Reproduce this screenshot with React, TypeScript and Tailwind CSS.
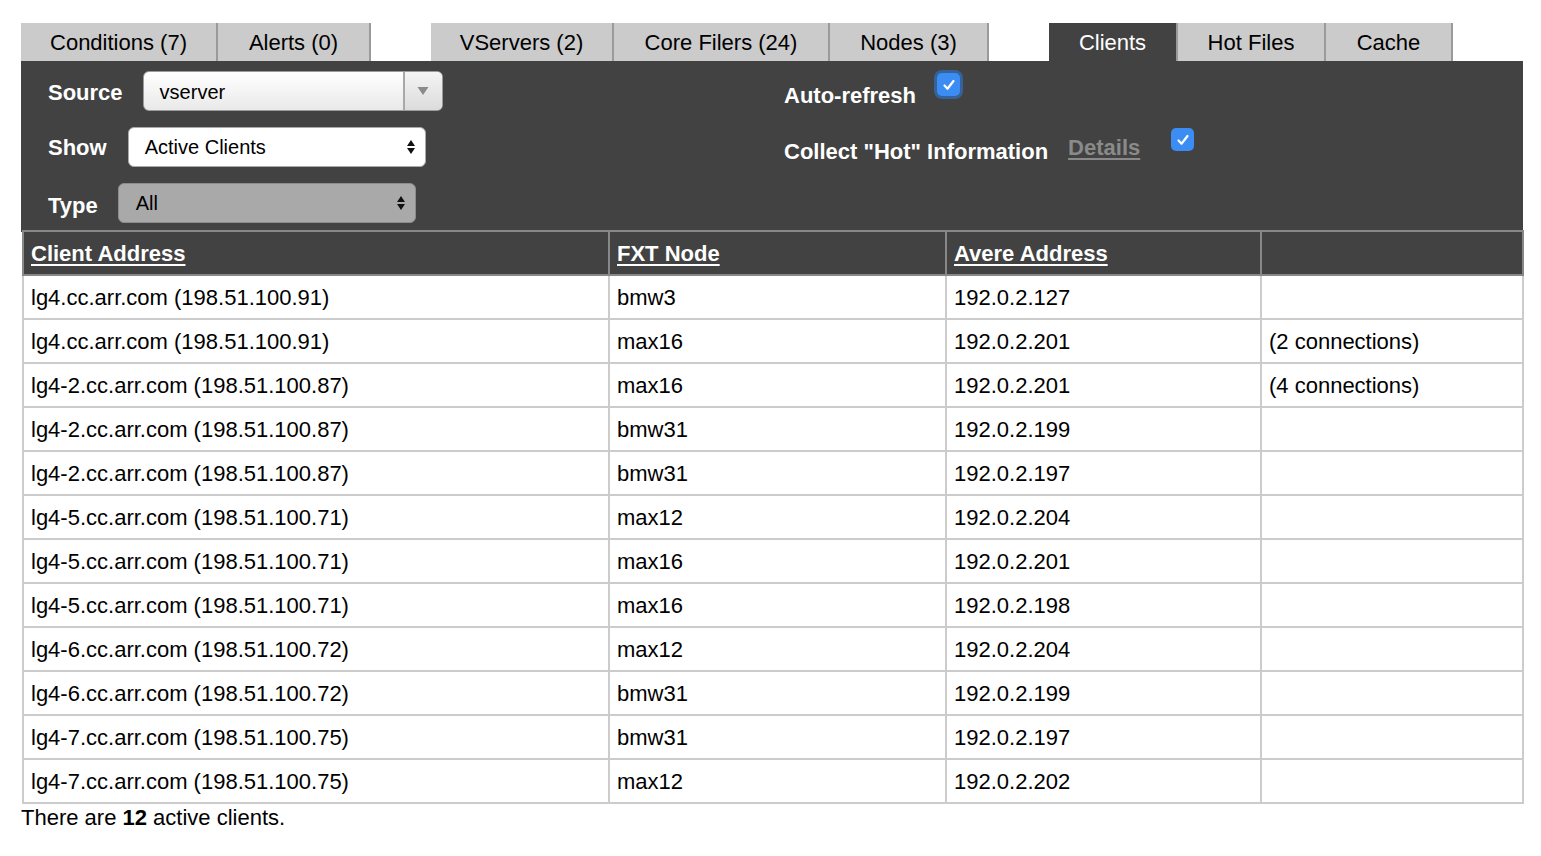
import React from 'react';

const font = { fontFamily: '"Liberation Sans", Arial, Helvetica, sans-serif' };

type Tab = { label: string; w: string; active?: boolean } | { gap: true };

const tabs: Tab[] = [
  { label: 'Conditions (7)', w: 'w-[197px]' },
  { label: 'Alerts (0)', w: 'w-[153px]' },
  { gap: true },
  { label: 'VServers (2)', w: 'w-[183px]' },
  { label: 'Core Filers (24)', w: 'w-[216px]' },
  { label: 'Nodes (3)', w: 'w-[159px]' },
  { gap: true },
  { label: 'Clients', w: 'w-[129px]', active: true },
  { label: 'Hot Files', w: 'w-[148px]' },
  { label: 'Cache', w: 'w-[127px]' },
];

const rows: [string, string, string, string][] = [
  ['lg4.cc.arr.com (198.51.100.91)', 'bmw3', '192.0.2.127', ''],
  ['lg4.cc.arr.com (198.51.100.91)', 'max16', '192.0.2.201', '(2 connections)'],
  ['lg4-2.cc.arr.com (198.51.100.87)', 'max16', '192.0.2.201', '(4 connections)'],
  ['lg4-2.cc.arr.com (198.51.100.87)', 'bmw31', '192.0.2.199', ''],
  ['lg4-2.cc.arr.com (198.51.100.87)', 'bmw31', '192.0.2.197', ''],
  ['lg4-5.cc.arr.com (198.51.100.71)', 'max12', '192.0.2.204', ''],
  ['lg4-5.cc.arr.com (198.51.100.71)', 'max16', '192.0.2.201', ''],
  ['lg4-5.cc.arr.com (198.51.100.71)', 'max16', '192.0.2.198', ''],
  ['lg4-6.cc.arr.com (198.51.100.72)', 'max12', '192.0.2.204', ''],
  ['lg4-6.cc.arr.com (198.51.100.72)', 'bmw31', '192.0.2.199', ''],
  ['lg4-7.cc.arr.com (198.51.100.75)', 'bmw31', '192.0.2.197', ''],
  ['lg4-7.cc.arr.com (198.51.100.75)', 'max12', '192.0.2.202', ''],
];

const UpDown = () => (
  <svg width="10" height="20" viewBox="0 0 10 20" className="shrink-0">
    <path d="M5 3L9 9H1z" fill="#111" />
    <path d="M5 17L9 11H1z" fill="#111" />
  </svg>
);

const Check = ({ focused }: { focused?: boolean }) => (
  <div
    className={`w-[23px] h-[23px] rounded-[5px] bg-[#3b8df3] flex items-center justify-center ${
      focused ? 'ring-[3px] ring-[#36629a]' : ''
    }`}
  >
    <svg width="16" height="16" viewBox="0 0 16 16">
      <path d="M3.5 8.5l3 3.2L12.5 4" fill="none" stroke="#fff" strokeWidth="2.2" strokeLinecap="round" strokeLinejoin="round" />
    </svg>
  </div>
);

export default function App() {
  return (
    <div className="min-h-screen bg-white text-black pt-[23px] pl-[21px]" style={font}>
      {/* TABS */}
      <div className="flex h-[38px] text-[22px]">
        {tabs.map((t, i) =>
          'gap' in t ? (
            <div key={i} className="w-[60px]" />
          ) : (
            <div
              key={i}
              className={`${t.w} h-full flex items-center justify-center pt-[1px] border-r-2 border-[#9a9a9a] ${
                t.active ? 'bg-[#424242] text-white' : 'bg-[#cbcbcb] text-black'
              }`}
            >
              {t.label}
            </div>
          )
        )}
      </div>

      {/* FILTERS */}
      <div className="w-[1502px] bg-[#424242] text-white flex pt-[10px] pb-[9px] pl-[27px]">
        <div className="w-[736px] flex flex-col gap-[16px]">
          <div className="flex items-center h-[40px]">
            <span className="font-bold text-[22px] pt-[2px]">Source</span>
            <div className="ml-[20px] w-[300px] h-[40px] rounded-[6px] border border-[#9c9c9c] bg-gradient-to-b from-white to-[#e9e9e9] flex text-black text-[20px] overflow-hidden">
              <div className="flex-1 flex items-center pl-[16px] pt-[2px]">vserver</div>
              <div className="w-[39px] border-l-2 border-[#a8a8a8] bg-gradient-to-b from-[#f4f4f4] to-[#dcdcdc] flex items-center justify-center">
                <svg width="12" height="10" viewBox="0 0 12 10">
                  <path d="M0.5 1H11.5L6 9z" fill="#8a8a8a" />
                </svg>
              </div>
            </div>
          </div>
          <div className="flex items-center h-[40px]">
            <span className="font-bold text-[22px]">Show</span>
            <div className="ml-[21px] w-[298px] h-[40px] rounded-[6px] border border-[#aaaaaa] bg-white flex items-center justify-between pl-[16px] pr-[9px] text-black text-[20px]">
              <span>Active Clients</span>
              <UpDown />
            </div>
          </div>
          <div className="flex items-center h-[40px]">
            <span className="font-bold text-[22px] pt-[4px]">Type</span>
            <div className="ml-[20px] w-[298px] h-[40px] rounded-[6px] border border-[#8c8c8c] bg-[#a9a9a9] flex items-center justify-between pl-[17px] pr-[9px] text-black text-[20px]">
              <span>All</span>
              <UpDown />
            </div>
          </div>
        </div>

        <div className="flex flex-col gap-[16px]">
          <div className="flex items-start h-[40px]">
            <span className="font-bold text-[22px] leading-[26px] mt-[12px]">Auto-refresh</span>
            <div className="ml-[21px] mt-[2px]">
              <Check focused />
            </div>
          </div>
          <div className="flex items-start h-[40px]">
            <span className="font-bold text-[22px] leading-[26px] mt-[12px]">Collect "Hot" Information</span>
            <span className="ml-[20px] mt-[8px] font-bold text-[22px] leading-[26px] text-[#8a8a8a] underline underline-offset-[3px]">
              Details
            </span>
            <div className="ml-[31px] mt-[1px]">
              <Check />
            </div>
          </div>
        </div>
      </div>

      {/* TABLE */}
      <table className="w-[1500px] ml-[1px] -mt-[2px] border-collapse table-fixed text-[22px]">
        <colgroup>
          <col className="w-[586px]" />
          <col className="w-[337px]" />
          <col className="w-[315px]" />
          <col className="w-[262px]" />
        </colgroup>
        <thead>
          <tr className="bg-[#424242] text-white">
            {['Client Address', 'FXT Node', 'Avere Address', ''].map((h, i) => (
              <th key={i} className="h-[44px] border-2 border-[#888888] px-[7px] text-left font-bold underline underline-offset-[3px]">
                {h}
              </th>
            ))}
          </tr>
        </thead>
        <tbody>
          {rows.map((r, i) => (
            <tr key={i}>
              {r.map((c, j) => (
                <td key={j} className="h-[44px] border-2 border-[#cccccc] px-[7px] whitespace-nowrap">
                  {c}
                </td>
              ))}
            </tr>
          ))}
        </tbody>
      </table>

      <div className="text-[22px] leading-[28px]">
        There are <b>12</b> active clients.
      </div>
    </div>
  );
}
